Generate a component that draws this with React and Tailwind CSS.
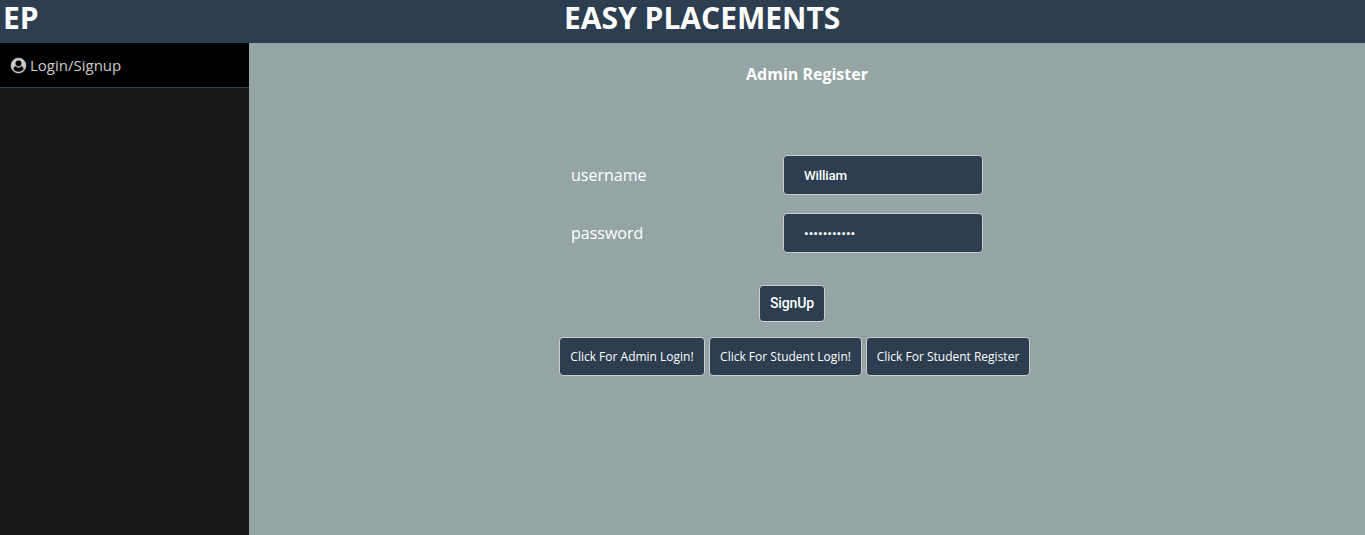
import { useState } from 'react';

const links = [
  { label: 'Click For Admin Login!', width: 'w-[146px]' },
  { label: 'Click For Student Login!', width: 'w-[153px]' },
  { label: 'Click For Student Register', width: 'w-[164px]' },
];

function UserIcon() {
  return (
    <svg viewBox="0 0 1792 1792" className="h-[15px] w-[15px] shrink-0 overflow-visible" fill="currentColor" stroke="currentColor" strokeWidth="50" aria-hidden="true">
      <path d="M1523 1339q-22-155-87.500-257.500t-184.500-118.500q-67 74-159.500 115.500t-195.500 41.500-195.500-41.500-159.500-115.500q-119 16-184.500 118.500t-87.500 257.500q106 150 271 237.500t356 87.500 356-87.500 271-237.500zm-243-699q0-159-112.500-271.500t-271.500-112.500-271.500 112.500-112.500 271.500 112.500 271.500 271.500 112.500 271.500-112.500 112.500-271.500zm512 256q0 182-71 347.500t-190.500 286-285.500 191.500-349 71q-182 0-348-71t-286-191-191-286-71-348 71-348 191-286 286-191 348-71 348 71 286 191 191 286 71 348z" />
    </svg>
  );
}

function Field({ label, type, value, onChange, tracking }) {
  return (
    <label className="flex h-10 items-center">
      <span className="w-[212px] text-base">{label}</span>
      <input
        type={type}
        value={value}
        onChange={onChange}
        className={`${tracking} h-10 w-[200px] rounded-[4px] border border-[#cccccc] bg-[#2c3e50] px-5 font-['Roboto',sans-serif] text-[13.333px] font-medium text-white outline-none`}
      />
    </label>
  );
}

export default function App() {
  const [username, setUsername] = useState('William');
  const [password, setPassword] = useState('placement01');

  return (
    <div className="flex h-screen flex-col overflow-hidden bg-[#95a5a5] font-['Open_Sans',sans-serif] text-white">
      <header className="flex h-[43px] shrink-0 bg-[#2c3e50] text-[30px] leading-[36px] font-bold">
        <div className="w-[564px] pl-[3px]">EP</div>
        <h1>EASY PLACEMENTS</h1>
      </header>
      <div className="flex min-h-0 flex-1">
        <aside className="w-[249px] shrink-0 bg-[#171717]">
          <a href="#login" className="flex h-[45px] items-center gap-1 border-b border-[#2c3e50] bg-black pl-[11px] text-[15px] text-[#cccccc]">
            <UserIcon />
            <span>Login/Signup</span>
          </a>
        </aside>
        <main className="flex-1">
          <h2 className="pt-[19px] pl-[497px] text-base leading-6 font-bold">Admin Register</h2>
          <form className="mt-[69px] flex flex-col gap-[18px] pl-[322px]" onSubmit={(e) => e.preventDefault()}>
            <Field label="username" type="text" tracking="tracking-[-0.15px]" value={username} onChange={(e) => setUsername(e.target.value)} />
            <Field label="password" type="password" tracking="tracking-normal" value={password} onChange={(e) => setPassword(e.target.value)} />
            <button className="mt-[14px] ml-[188px] h-[37px] w-[66px] rounded-[4px] border border-[#cccccc] bg-[#2c3e50] font-['Roboto',sans-serif] text-[14px] font-medium tracking-[-0.15px]">
              SignUp
            </button>
          </form>
          <nav className="mt-[15px] flex gap-1 pl-[310px]">
            {links.map(({ label, width }) => (
              <button key={label} className={`${width} h-[39px] rounded-[4px] border border-[#cccccc] bg-[#2c3e50] text-[12px] whitespace-nowrap`}>
                {label}
              </button>
            ))}
          </nav>
        </main>
      </div>
    </div>
  );
}
